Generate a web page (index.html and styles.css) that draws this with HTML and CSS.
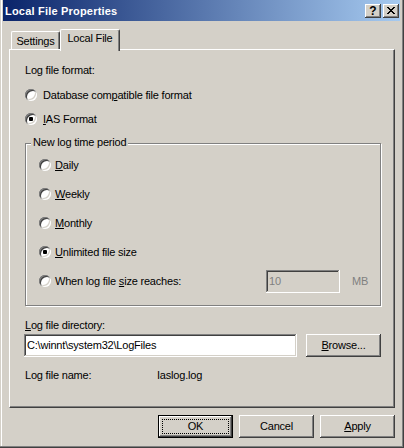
FILE: index.html
```html
<!DOCTYPE html>
<html>
<head>
<meta charset="utf-8">
<title>Local File Properties</title>
<link rel="stylesheet" href="styles.css">
</head>
<body>
<div class="window">
  <div class="titlebar">
    <span class="title">Local File Properties</span>
    <span class="capbtns">
      <span class="capbtn help">?</span>
      <span class="capbtn close"><svg width="8" height="7" viewBox="0 0 8 7" shape-rendering="crispEdges"><path d="M0 0h2v1H0zM6 0h2v1H6zM1 1h2v1H1zM5 1h2v1H5zM2 2h4v1H2zM3 3h2v1H3zM2 4h4v1H2zM1 5h2v1H1zM5 5h2v1H5zM0 6h2v1H0zM6 6h2v1H6z" fill="#000"/></svg></span>
    </span>
  </div>
  <div class="client">
    <div class="tabs">
      <div class="tab settings">Settings</div>
      <div class="tab active">Local File</div>
    </div>
    <div class="panel">
      <div class="line fmt">Log file format:</div>
      <div class="opt db"><span class="radio"></span><span class="olabel">Database com<u>p</u>atible file format</span></div>
      <div class="opt ias"><span class="radio on"></span><span class="olabel"><u>I</u>AS Format</span></div>
      <div class="group">
        <span class="legend">New log time period</span>
        <div class="gopt"><span class="radio"></span><span class="glabel"><u>D</u>aily</span></div>
        <div class="gopt"><span class="radio"></span><span class="glabel"><u>W</u>eekly</span></div>
        <div class="gopt"><span class="radio"></span><span class="glabel"><u>M</u>onthly</span></div>
        <div class="gopt"><span class="radio on"></span><span class="glabel"><u>U</u>nlimited file size</span></div>
        <div class="gopt"><span class="radio"></span><span class="glabel wlabel">When log file <u>s</u>ize reaches:</span><span class="edit disabled size">10</span><span class="unit">MB</span></div>
      </div>
      <div class="line dirlabel"><u>L</u>og file directory:</div>
      <div class="dirrow"><span class="edit dir">C:\winnt\system32\LogFiles</span><span class="btn browse"><span><u>B</u>rowse...</span></span></div>
      <div class="line namerow"><span class="namelabel">Log file name:</span><span>Iaslog.log</span></div>
    </div>
    <div class="actions">
      <span class="btn default">OK</span>
      <span class="btn">Cancel</span>
      <span class="btn"><span><u>A</u>pply</span></span>
    </div>
  </div>
</div>
</body>
</html>
```
FILE: styles.css
```css
* { box-sizing: border-box; }
html, body { margin: 0; padding: 0; }
body {
  font-family: "Liberation Sans", Arial, sans-serif;
  font-size: 11px;
  letter-spacing: -0.2px;
  color: #000;
  background: #d4d0c8;
}
u { text-decoration: underline; text-underline-offset: 1px; }

.window {
  width: 404px;
  height: 448px;
  background: #d4d0c8;
  padding: 0 4px 4px 3px;
  display: flex;
  flex-direction: column;
  box-shadow: inset -1px -1px 0 #404040, inset -2px -2px 0 #808080, inset 1px 0 0 #d4d0c8, inset 2px 0 0 #fff;
}

.titlebar {
  height: 21px;
  flex: none;
  display: flex;
  align-items: flex-start;
  padding-left: 2px;
  background: linear-gradient(to right, #0a246a, #a6caf0);
  color: #fff;
}
.title {
  font-weight: bold;
  letter-spacing: 0.2px;
  line-height: 13px;
  padding-top: 5px;
}
.capbtns {
  margin-left: auto;
  display: flex;
  gap: 2px;
  padding-top: 4px;
  padding-right: 1px;
}
.capbtn {
  width: 16px;
  height: 14px;
  background: #d4d0c8;
  display: flex;
  align-items: center;
  justify-content: center;
  color: #000;
  letter-spacing: 0;
  box-shadow: inset -1px -1px 0 #404040, inset 1px 1px 0 #fff, inset -2px -2px 0 #808080;
}
.help {
  font-weight: bold;
  font-size: 12px;
  line-height: 12px;
  padding-bottom: 1px;
}
.close svg { display: block; margin-bottom: 1px; }

.client {
  flex: 1;
  padding: 8px 5px 0 6px;
  display: flex;
  flex-direction: column;
}

.tabs {
  height: 20px;
  display: flex;
  align-items: flex-end;
  padding-left: 2px;
}
.tab {
  height: 18px;
  background: #d4d0c8;
  border-top: 1px solid #fff;
  border-left: 1px solid #fff;
  border-right: 1px solid #404040;
  border-radius: 2px 2px 0 0;
  box-shadow: inset -1px 0 0 #808080;
  text-align: center;
  line-height: 13px;
  padding-top: 3px;
}
.tab.settings { width: 49px; }
.tab.active {
  width: 60px;
  height: 22px;
  margin-bottom: -2px;
  padding-top: 2px;
  position: relative;
  z-index: 1;
}

.panel {
  width: 386px;
  height: 359px;
  flex: none;
  border-top: 1px solid #fff;
  border-left: 1px solid #fff;
  border-right: 1px solid #404040;
  border-bottom: 1px solid #404040;
  box-shadow: inset -1px -1px 0 #808080;
  padding: 13px 0 0 15px;
}

.line { line-height: 14px; height: 14px; }
.opt, .gopt {
  display: flex;
  align-items: center;
  height: 14px;
  line-height: 14px;
}
.opt.db { margin-top: 11px; }
.opt.ias { margin-top: 10px; }
.olabel { margin-left: 6px; }
.glabel { margin-left: 4px; }

.radio {
  flex: none;
  width: 12px;
  height: 12px;
  border-radius: 50%;
  background: #fff;
  position: relative;
  box-shadow: inset 1px 1px 0 #808080, inset -1px -1px 0 #fff, inset 2px 2px 0 #404040, inset -2px -2px 0 #d4d0c8;
}
.radio.on::after {
  content: "";
  position: absolute;
  left: 4px;
  top: 4px;
  width: 4px;
  height: 4px;
  border-radius: 1px;
  background: #000;
}

.group {
  position: relative;
  margin-top: 17px;
  width: 356px;
  height: 163px;
  border: 1px solid #808080;
  box-shadow: inset 1px 1px 0 #fff, 1px 1px 0 #fff;
  padding: 14px 0 0 13px;
  display: flex;
  flex-direction: column;
  gap: 15px;
}
.legend {
  position: absolute;
  left: 5px;
  top: -9px;
  padding: 0 2px;
  line-height: 14px;
  background: #d4d0c8;
}
.wlabel { width: 211px; flex: none; }

.edit {
  flex: none;
  height: 23px;
  line-height: 19px;
  padding: 2px 3px;
  background: #fff;
  white-space: nowrap;
  box-shadow: inset -1px -1px 0 #fff, inset 1px 1px 0 #808080, inset -2px -2px 0 #d4d0c8, inset 2px 2px 0 #404040;
}
.edit.disabled { background: #d4d0c8; color: #808080; }
.edit.size { width: 74px; }
.unit { margin-left: 12px; color: #808080; }

.dirlabel { margin-top: 12px; }
.dirrow {
  margin-top: 2px;
  margin-left: -1px;
  display: flex;
  gap: 9px;
}
.edit.dir { width: 273px; padding-left: 3px; }

.namerow { margin-top: 11px; display: flex; }
.namelabel { width: 132px; flex: none; }

.btn {
  width: 75px;
  height: 23px;
  flex: none;
  display: flex;
  align-items: center;
  justify-content: center;
  background: #d4d0c8;
  line-height: 13px;
  box-shadow: inset -1px -1px 0 #404040, inset 1px 1px 0 #fff, inset -2px -2px 0 #808080;
}
.btn.default {
  border: 1px solid #000;
  outline: 1px dotted #000;
  outline-offset: -5px;
}

.actions {
  margin-top: 7px;
  display: flex;
  justify-content: flex-end;
  gap: 6px;
}
```
